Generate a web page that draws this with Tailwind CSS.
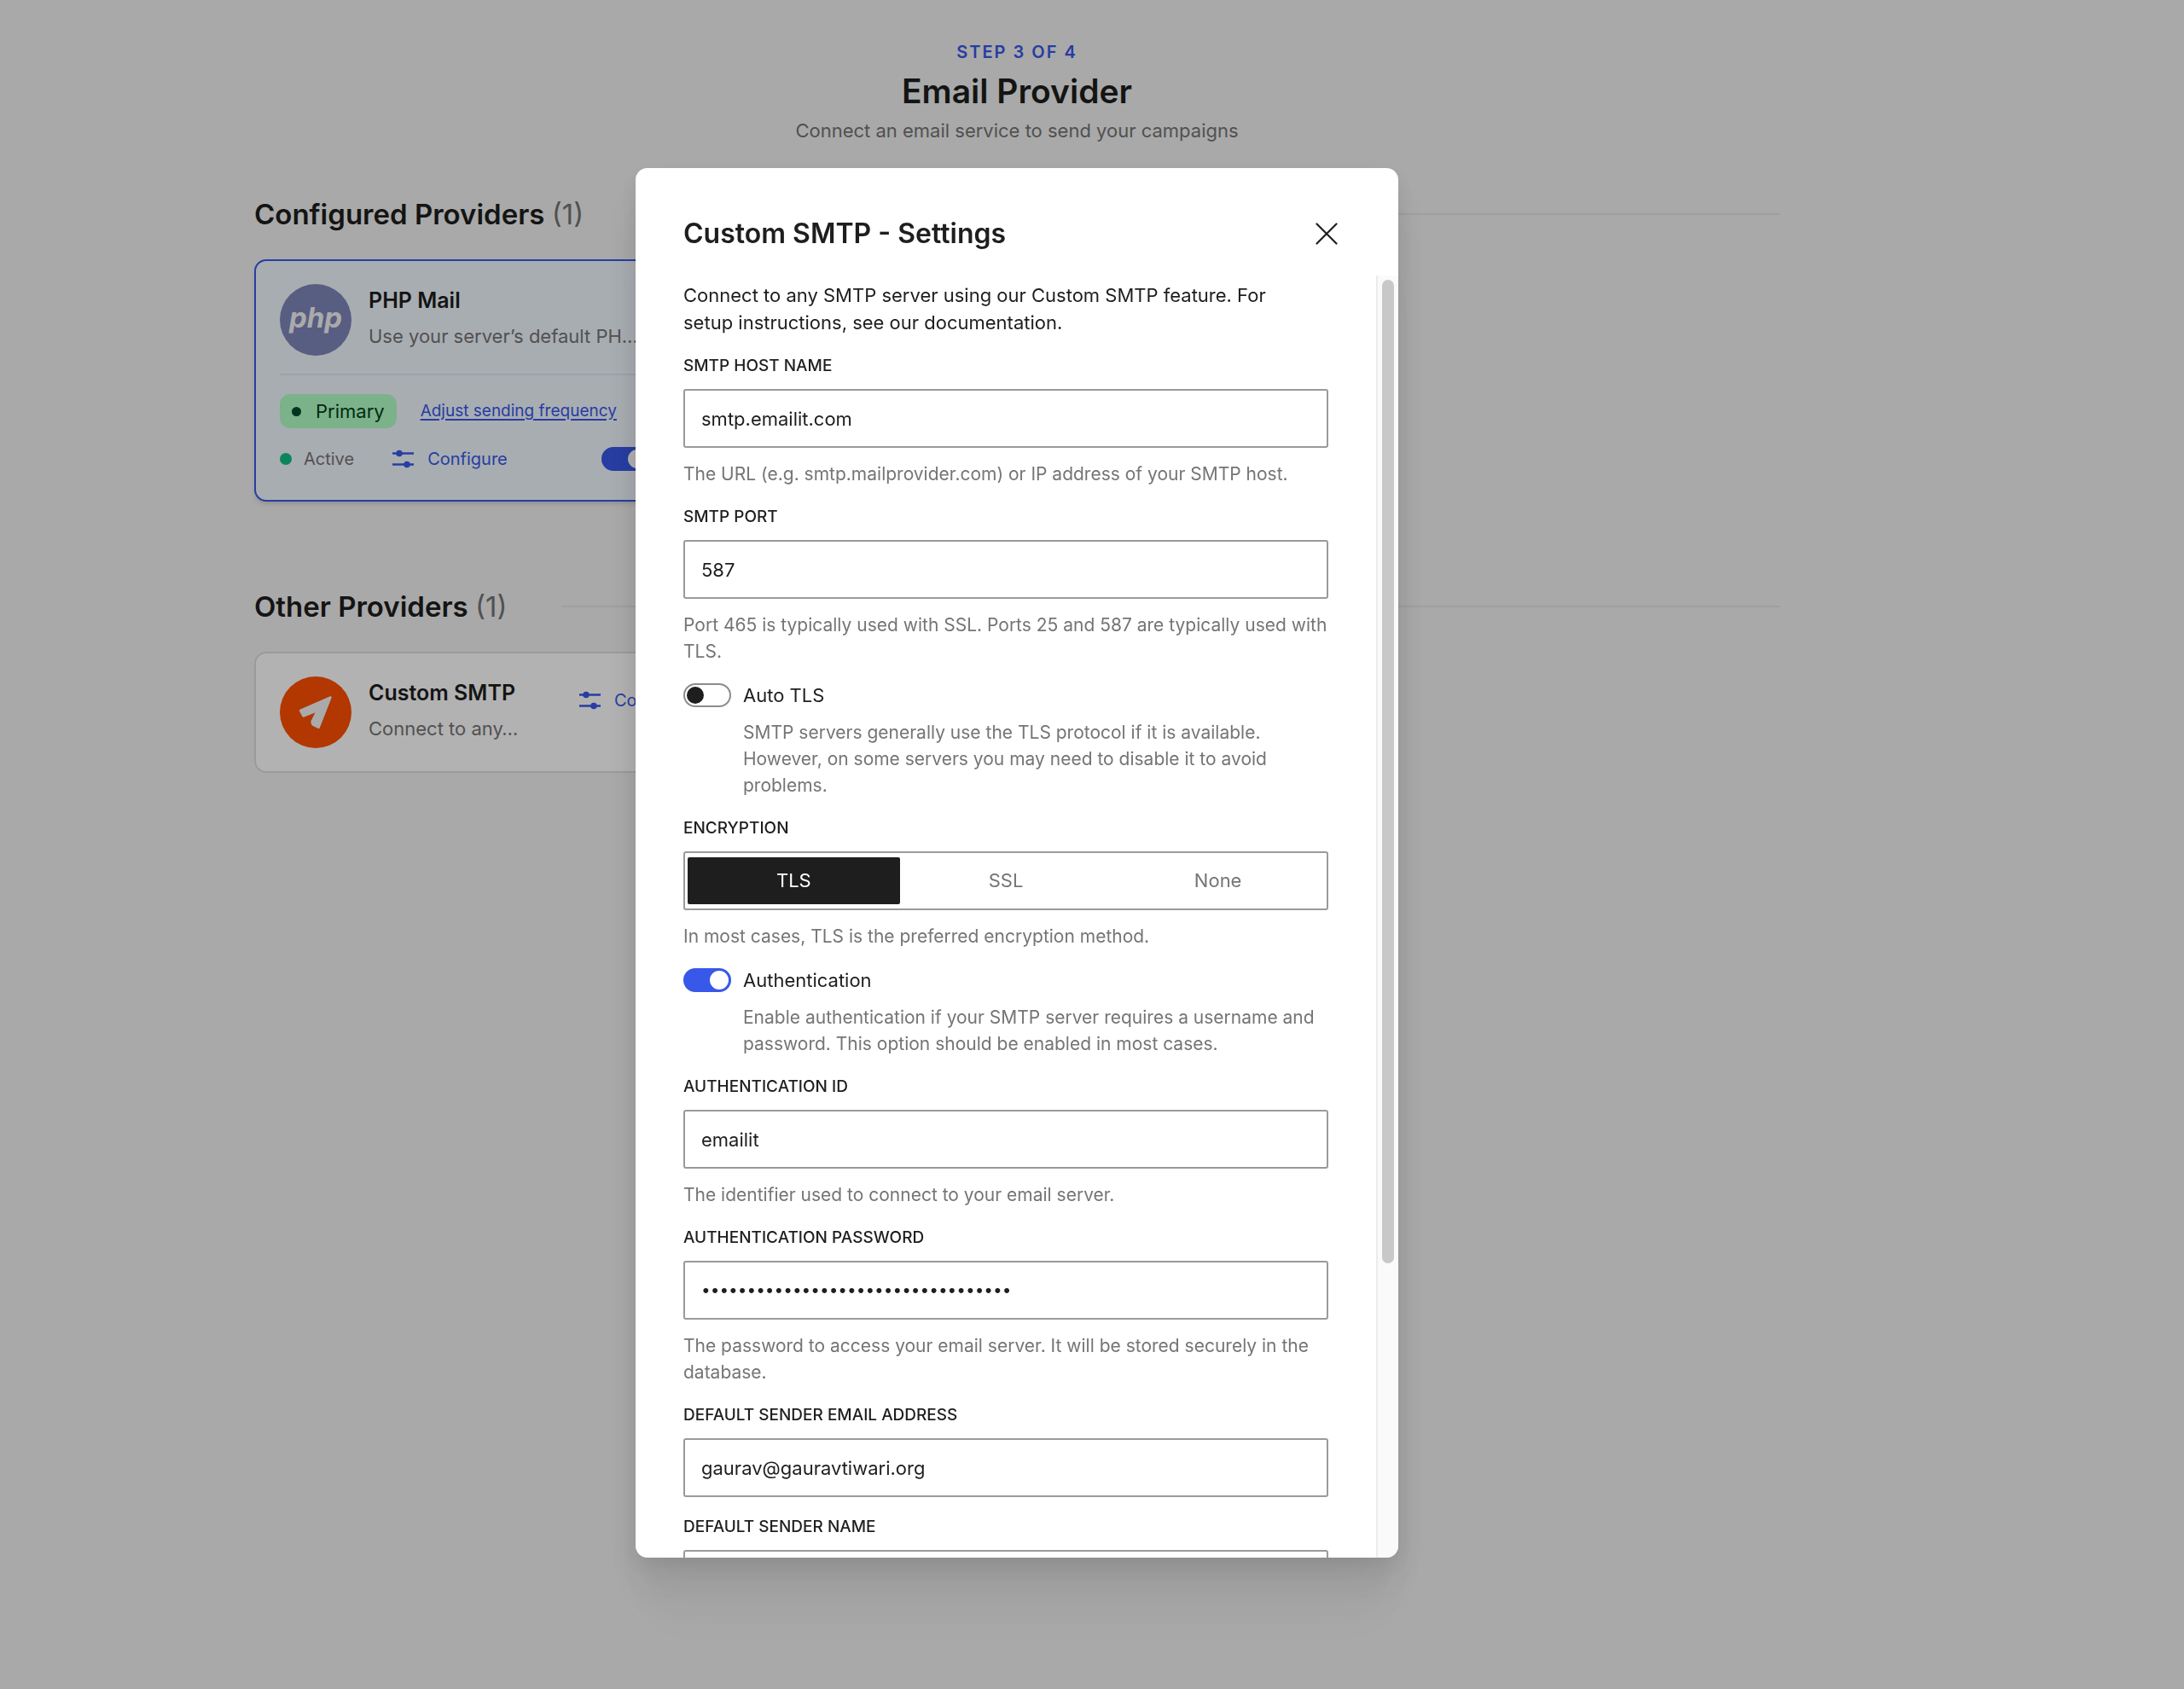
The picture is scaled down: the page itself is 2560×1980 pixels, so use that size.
<!doctype html>
<html lang="en">
  <head>
    <meta charset="UTF-8" />
    <meta name="viewport" content="width=device-width, initial-scale=1.0" />
    <title>Email Provider</title>
    <script src="https://cdn.jsdelivr.net/npm/@tailwindcss/browser@4"></script>
  </head>
  <body class="min-h-screen bg-[#f2f2f2] font-['Inter',sans-serif] text-[22px] text-[#1e1e1e]">
    <div class="pr-44">
      <main class="mx-auto max-w-[1788px] pt-[46px]">
        <header class="text-center">
          <p class="text-[20px] leading-[30px] font-semibold tracking-widest text-[#3858e9]">STEP 3 OF 4</p>
          <h1 class="mt-2 text-[39px] leading-[46px] font-semibold">Email Provider</h1>
          <p class="mt-[7px] leading-8 text-[#757575]">Connect an email service to send your campaigns</p>
        </header>

        <!-- Configured providers -->
        <section class="mt-[62px]">
          <div class="flex items-center gap-[63px]">
            <h2 class="text-[33px] leading-10 font-semibold">Configured Providers <span class="font-normal text-[#757575]">(1)</span></h2>
            <div class="h-0.5 flex-1 bg-[#e4e4e4]"></div>
          </div>
          <div class="mt-[33px] grid grid-cols-3 gap-7">
            <article class="rounded-[14px] border-2 border-[#3858e9] bg-[#f1f8ff] px-7 pt-[27px] pb-[34px] shadow-md">
              <div class="flex items-start gap-5 border-b-2 border-[#e1e8ee] pb-[21px]">
                <div class="flex size-[84px] shrink-0 items-center justify-center rounded-full bg-[#7f86ba] pb-1 text-[33px] font-bold text-[#f4f4f4] italic">php</div>
                <div class="min-w-0">
                  <h3 class="text-[25px] leading-[38px] font-semibold">PHP Mail</h3>
                  <p class="mt-1 leading-[38px] text-[#757575]">Use your server’s default PH…</p>
                </div>
              </div>
              <div class="mt-[22px] flex items-center gap-7">
                <span class="flex h-10 items-center gap-[17px] rounded-xl bg-[#b2ffc5] px-[14px] text-[#003d1a]">
                  <span class="size-[11px] rounded-full bg-[#004d2e]"></span>Primary
                </span>
                <a href="#" class="text-[19px] text-[#3858e9] underline decoration-2 underline-offset-3">Adjust sending frequency</a>
              </div>
              <div class="mt-[22px] flex h-7 items-center text-[20px]">
                <span class="size-[14px] rounded-full bg-[#10c084]"></span>
                <span class="ml-[14px] text-[#757575]">Active</span>
                <button type="button" class="ml-[45px] flex items-center gap-4 text-[#3858e9]">
                  <svg class="h-[22px] w-[25px]" viewBox="0 0 25 22" fill="none" stroke="currentColor" stroke-width="2.4">
                    <path d="M0 4.5h25M0 17.5h25" />
                    <circle cx="8" cy="4.5" r="3.8" fill="currentColor" stroke="none" />
                    <circle cx="17" cy="17.5" r="3.8" fill="currentColor" stroke="none" />
                  </svg>
                  Configure
                </button>
                <input type="checkbox" role="switch" aria-label="Enable PHP Mail" checked class="ml-[110px] flex h-7 w-14 appearance-none items-center rounded-full border-2 border-[#3858e9] bg-[#3858e9] before:mr-px before:ml-auto before:size-[22px] before:rounded-full before:bg-white" />
              </div>
            </article>
          </div>
        </section>

        <!-- Other providers -->
        <section class="mt-[103px]">
          <div class="flex items-center gap-[63px]">
            <h2 class="text-[33px] leading-10 font-semibold">Other Providers <span class="font-normal text-[#757575]">(1)</span></h2>
            <div class="h-0.5 flex-1 bg-[#e4e4e4]"></div>
          </div>
          <div class="mt-[33px] grid grid-cols-3 gap-7">
            <article class="flex items-start rounded-[14px] border-2 border-[#dcdce6] bg-white px-7 py-[27px]">
              <svg class="size-[84px] shrink-0" viewBox="0 0 84 84">
                <circle cx="42" cy="42" r="42" fill="#ff4f00" />
                <path d="M59.5 24.5 24 40l3.5 6.5L44 40l-6.500 13 1 3.500 7 3.500Z" fill="#f4f4f4" stroke="#f4f4f4" stroke-width="2.5" stroke-linejoin="round" />
              </svg>
              <div class="ml-5 w-[180px]">
                <h3 class="text-[25px] leading-[38px] font-semibold">Custom SMTP</h3>
                <p class="mt-1 leading-[38px] text-[#757575]">Connect to any…</p>
              </div>
              <button type="button" class="ml-[67px] flex h-14 items-center gap-4 text-[20px] text-[#3858e9]">
                <svg class="h-[22px] w-[25px]" viewBox="0 0 25 22" fill="none" stroke="currentColor" stroke-width="2.4">
                  <path d="M0 4.5h25M0 17.5h25" />
                  <circle cx="8" cy="4.5" r="3.8" fill="currentColor" stroke="none" />
                  <circle cx="17" cy="17.5" r="3.8" fill="currentColor" stroke="none" />
                </svg>
                Configure
              </button>
            </article>
          </div>
        </section>
      </main>
    </div>

    <!-- Settings modal -->
    <div class="fixed inset-0 flex justify-center bg-black/30 pt-[197px] pr-44 pb-[154px]">
      <div role="dialog" aria-labelledby="modal-title" class="flex w-full max-w-[894px] flex-col overflow-hidden rounded-[14px] bg-white shadow-[0_9px_26px_rgba(0,0,0,0.08),0_26px_47px_rgba(0,0,0,0.07),0_52px_63px_rgba(0,0,0,0.04),0_87px_75px_rgba(0,0,0,0.02)]">
        <div class="flex items-center justify-between pt-14 pr-[71px] pb-7 pl-14">
          <h2 id="modal-title" class="text-[32px] leading-[42px] font-semibold">Custom SMTP - Settings</h2>
          <button type="button" aria-label="Close">
            <svg class="size-[26px]" viewBox="0 0 26 26" fill="none" stroke="currentColor" stroke-width="2.2" stroke-linecap="round">
              <path d="M1.5 1.5l23 23M24.5 1.5l-23 23" />
            </svg>
          </button>
        </div>

        <div class="flex min-h-0 flex-1">
          <form class="flex min-w-0 flex-1 flex-col gap-[22px] overflow-y-auto pt-[7px] pr-14 pl-14 [scrollbar-width:none]">
            <p class="pr-7 leading-8">Connect to any SMTP server using our Custom SMTP feature. For setup instructions, see our documentation.</p>

            <div>
              <label for="host" class="block text-[19px] leading-[26px] font-medium">SMTP HOST NAME</label>
              <input id="host" type="text" value="smtp.emailit.com" class="mt-[14px] block h-[69px] w-full rounded-[3px] border-2 border-[#9a9a9a] px-[19px]" />
              <p class="mt-[15px] text-[21px] leading-[31px] text-[#757575]">The URL (e.g. smtp.mailprovider.com) or IP address of your SMTP host.</p>
            </div>

            <div>
              <label for="port" class="block text-[19px] leading-[26px] font-medium">SMTP PORT</label>
              <input id="port" type="text" value="587" class="mt-[14px] block h-[69px] w-full rounded-[3px] border-2 border-[#9a9a9a] px-[19px]" />
              <p class="mt-[15px] text-[21px] leading-[31px] text-[#757575]">Port 465 is typically used with SSL. Ports 25 and 587 are typically used with TLS.</p>
            </div>

            <div>
              <div class="flex h-7 items-center gap-[14px]">
                <input id="auto-tls" type="checkbox" role="switch" class="flex h-7 w-14 appearance-none items-center rounded-full border-2 border-[#8c8c8c] bg-white before:ml-0.5 before:size-5 before:rounded-full before:bg-[#1e1e1e]" />
                <label for="auto-tls">Auto TLS</label>
              </div>
              <p class="mt-[14px] pl-[70px] text-[21px] leading-[31px] text-[#757575]">SMTP servers generally use the TLS protocol if it is available. However, on some servers you may need to disable it to avoid problems.</p>
            </div>

            <fieldset>
              <legend class="block text-[19px] leading-[26px] font-medium">ENCRYPTION</legend>
              <div class="mt-[14px] grid h-[69px] grid-cols-3 rounded-[3px] border-2 border-[#9a9a9a] px-[3px] py-[5px] text-[#757575]">
                <label class="flex items-center justify-center rounded-xs has-checked:bg-[#1e1e1e] has-checked:text-white"><input type="radio" name="encryption" checked class="sr-only" />TLS</label>
                <label class="flex items-center justify-center rounded-xs has-checked:bg-[#1e1e1e] has-checked:text-white"><input type="radio" name="encryption" class="sr-only" />SSL</label>
                <label class="flex items-center justify-center rounded-xs has-checked:bg-[#1e1e1e] has-checked:text-white"><input type="radio" name="encryption" class="sr-only" />None</label>
              </div>
              <p class="mt-[15px] text-[21px] leading-[31px] text-[#757575]">In most cases, TLS is the preferred encryption method.</p>
            </fieldset>

            <div>
              <div class="flex h-7 items-center gap-[14px]">
                <input id="auth" type="checkbox" role="switch" checked class="flex h-7 w-14 appearance-none items-center rounded-full border-2 border-[#3858e9] bg-[#3858e9] before:mr-px before:ml-auto before:size-[22px] before:rounded-full before:bg-white" />
                <label for="auth">Authentication</label>
              </div>
              <p class="mt-[14px] pl-[70px] text-[21px] leading-[31px] text-[#757575]">Enable authentication if your SMTP server requires a username and password. This option should be enabled in most cases.</p>
            </div>

            <div>
              <label for="auth-id" class="block text-[19px] leading-[26px] font-medium">AUTHENTICATION ID</label>
              <input id="auth-id" type="text" value="emailit" class="mt-[14px] block h-[69px] w-full rounded-[3px] border-2 border-[#9a9a9a] px-[19px]" />
              <p class="mt-[15px] text-[21px] leading-[31px] text-[#757575]">The identifier used to connect to your email server.</p>
            </div>

            <div>
              <label for="auth-password" class="block text-[19px] leading-[26px] font-medium">AUTHENTICATION PASSWORD</label>
              <input id="auth-password" type="password" value="em_api_000000000000000000000000000" class="mt-[14px] block h-[69px] w-full rounded-[3px] border-2 border-[#9a9a9a] px-[19px] text-[19px]" />
              <p class="mt-[15px] text-[21px] leading-[31px] text-[#757575]">The password to access your email server. It will be stored securely in the database.</p>
            </div>

            <div>
              <label for="sender-email" class="block text-[19px] leading-[26px] font-medium">DEFAULT SENDER EMAIL ADDRESS</label>
              <input id="sender-email" type="email" value="gaurav@gauravtiwari.org" class="mt-[14px] block h-[69px] w-full rounded-[3px] border-2 border-[#9a9a9a] px-[19px]" />
            </div>

            <div>
              <label for="sender-name" class="block text-[19px] leading-[26px] font-medium">DEFAULT SENDER NAME</label>
              <input id="sender-name" type="text" class="mt-[14px] block h-[69px] w-full rounded-[3px] border-2 border-[#9a9a9a] px-[19px]" />
            </div>
          </form>

          <!-- Scrollbar -->
          <div class="w-[26px] shrink-0 border-l-2 border-[#ececec] bg-[#fafafa] px-[5px] pt-[5px]">
            <div class="h-[77%] rounded-full bg-[#c8c8c8]"></div>
          </div>
        </div>
      </div>
    </div>
  </body>
</html>
